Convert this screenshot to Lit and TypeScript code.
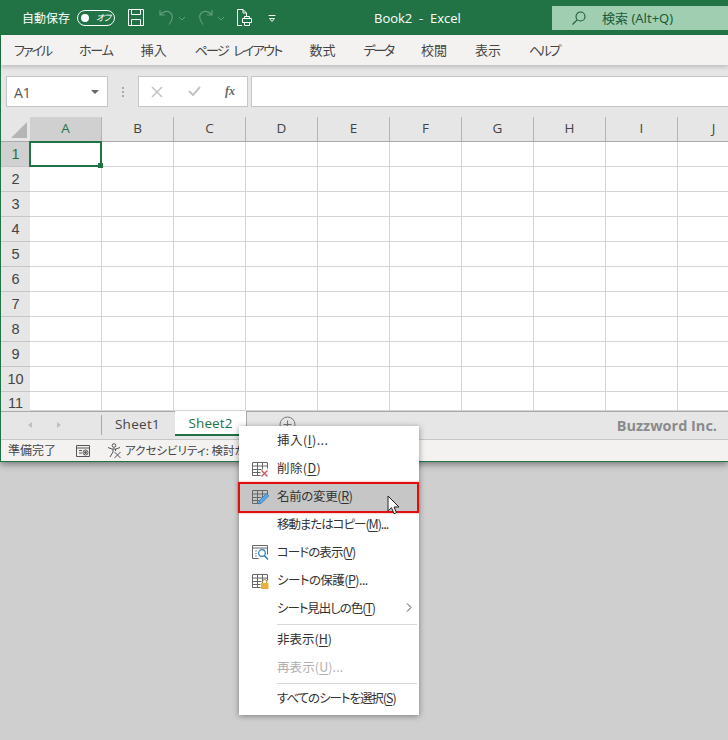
import { LitElement, html, css, svg } from "lit";
import { customElement } from "lit/decorators.js";
import { styleMap } from "lit/directives/style-map.js";

const COLS = ["A", "B", "C", "D", "E", "F", "G", "H", "I", "J"];
const ROWS = [1, 2, 3, 4, 5, 6, 7, 8, 9, 10, 11];
const TABS: [string, number, number][] = [
  ["ファイル", -2, 0], ["ホーム", -1.2, 0], ["挿入", 0, 0], ["ページ レイアウト", -1.7, 4], ["数式", 0, 0],
  ["データ", -2.3, 0], ["校閲", 0, 0], ["表示", 0, 0], ["ヘルプ", -2.4, 0],
];

const gridIcon = (extra: unknown) => html`<svg width="18" height="16" viewBox="0 0 18 16" fill="none" stroke="#666" stroke-width="1">
  <path d="M.5 1.500h15v6M.5 1.500v13h8M.5 5h15M.5 8.500h9M.5 11.500h8M5.500 1.500v13M10.500 1.500v7" />${extra}</svg>`;

const ICONS: Record<string, unknown> = {
  del: gridIcon(svg`<path d="M9.500 9.500l6 6M15.500 9.500l-6 6" stroke="#d8505a" stroke-width="1.300"/>`),
  ren: gridIcon(svg`<path d="M6.500 15l1-3.500 7-7 2.300 2.300-7 7z" fill="#5aa6e0" stroke="#2f7fc0" stroke-width=".8"/>`),
  code: html`<svg width="18" height="16" viewBox="0 0 18 16" fill="none" stroke="#666">
    <path d="M.5 13.500V.5h15v9M.5 13.500h6M.5 3h15" />
    <path d="M3 6h2M3 8.500h2M3 11h2" stroke="#999"/>
    <circle cx="10" cy="8" r="3.300" stroke="#2f7fc0" stroke-width="1.200"/><path d="M12.300 10.500l3.700 4" stroke="#2f7fc0" stroke-width="1.600"/></svg>`,
  lock: gridIcon(svg`<rect x="9" y="10" width="7.500" height="6" fill="#e8b23a" stroke="none"/><path d="M10.700 10V8.500a2 2 0 0 1 4 0V10" stroke="#a8842c"/>`),
};

type Entry = { pre: string; key: string; post?: string; ls?: number; icon?: string; cls?: string; sub?: boolean } | null;
const MENU: Entry[] = [
  { pre: "挿入(", key: "I", post: ")...", ls: 0.5 },
  { pre: "削除(", key: "D", post: ")", ls: 0.4, icon: "del" },
  { pre: "名前の変更(", key: "R", post: ")", ls: -0.35, icon: "ren", cls: "hl" },
  { pre: "移動またはコピー(", key: "M", post: ")...", ls: -1.05 },
  { pre: "コードの表示(", key: "V", post: ")", ls: -0.95, icon: "code" },
  { pre: "シートの保護(", key: "P", post: ")...", ls: -0.55, icon: "lock" },
  { pre: "シート見出しの色(", key: "T", post: ")", ls: -1.05, sub: true },
  null,
  { pre: "非表示(", key: "H", post: ")" },
  { pre: "再表示(", key: "U", post: ")...", ls: 0.1, cls: "off" },
  null,
  { pre: "すべてのシートを選択(", key: "S", post: ")", ls: -1.05 },
];

@customElement("app-root")
export class AppRoot extends LitElement {
  static styles = css`
    :host { display: block; width: 728px; height: 740px; background: #cfcfcf; position: relative; overflow: hidden;
      font-family: "Noto Sans CJK JP", "Noto Sans", sans-serif; color: #444; }
    .win { display: flex; flex-direction: column; height: 461px; border-left: 1px solid #217346; border-bottom: 1px solid #217346;
      box-sizing: content-box; box-shadow: 0 2px 7px rgba(0,0,0,.45); background: #fff; }
    .title { height: 35px; margin-left: -1px; background: #217346; color: #fff; display: flex; align-items: center; flex: none; position: relative; font-size: 12px; }
    .autosave { margin-left: 22px; }
    .toggle { margin-left: 7px; width: 38px; height: 16px; box-sizing: border-box; border: 1px solid #fff; border-radius: 8px; display: flex; align-items: center; position: relative; }
    .toggle i { width: 8px; height: 8px; border-radius: 50%; background: #fff; margin-left: 3px; }
    .toggle span { font-size: 9px; margin-left: 7px; font-style: italic; line-height: 1; font-feature-settings: "palt"; letter-spacing: -.8px; white-space: nowrap; }
    .qa { display: flex; align-items: center; margin-left: 12px; }
    .qa.save { margin-left: 13px; }
    .qa.undo { margin-left: 13px; }
    .qa.redo { margin-left: 5px; }
    .qa.print { margin-left: 7px; }
    .qa.more { margin-left: 16px; padding-top: 2px; }
    .booktitle { position: absolute; left: 374px; top: 10px; font: 13px/17px "Open Sans", sans-serif; white-space: pre; }
    .search { position: absolute; left: 552px; top: 6px; width: 176px; height: 24px; background: #9fcfb0; color: #1e5a3a; display: flex; align-items: center; font-size: 13px; }
    .search svg { margin-left: 19px; }
    .search span { margin-left: 15px; margin-bottom: 2px; font-family: "Noto Sans", "Noto Sans CJK JP", sans-serif; }
    .tabs { height: 30px; box-sizing: border-box; padding: 0 0 2px 13px; flex: none; background: #f3f2f1; display: flex; align-items: center; gap: 28px; font-size: 13px; color: #444; position: relative; z-index: 1; box-shadow: 0 2px 4px rgba(0,0,0,.18); font-feature-settings: "palt"; white-space: nowrap; }
    .fbar { height: 52px; flex: none; background: #e6e6e6; display: flex; padding: 11px 0 10px 5px; box-sizing: border-box; align-items: stretch; }
    .box { background: #fff; border: 1px solid #c6c6c6; box-sizing: border-box; display: flex; align-items: center; }
    .name { width: 102px; padding: 2px 8px 0 7px; justify-content: space-between; font: 14px "Open Sans", sans-serif; color: #555; }
    .tri { width: 0; height: 0; border-left: 4px solid transparent; border-right: 4px solid transparent; border-top: 4px solid #666; margin-top: -2px; }
    .dots { width: 30px; display: flex; flex-direction: column; align-items: center; justify-content: center; gap: 2px; }
    .dots i { width: 2px; height: 2px; background: #aaa; }
    .fx { width: 110px; justify-content: space-between; padding: 0 12px 0 12px; color: #888; }
    .fx em { font: italic bold 12px "Liberation Serif", serif; color: #666; }
    .finput { flex: 1; margin-left: 3px; border-right: none; }
    .grid { flex: 1; min-height: 0; overflow: hidden; display: grid; grid-template-columns: 29px repeat(10, 72px); grid-template-rows: 25px repeat(10, 25px) 19px; background: #fff; }
    .corner { background: #e6e6e6; border-bottom: 1px solid #a9a9a9; box-sizing: border-box; display: flex; align-items: flex-end; justify-content: flex-end; padding: 0 3px 3px 0; }
    .corner i { width: 0; height: 0; border-style: solid; border-width: 0 0 16px 16px; border-color: transparent transparent #b5b5b5 transparent; }
    .ch { background: #e6e6e6; border-right: 1px solid #b4b4b4; border-bottom: 1px solid #a9a9a9; box-sizing: border-box; display: flex; align-items: center; justify-content: center; font: 13.5px "Open Sans", sans-serif; color: #444; padding-bottom: 2px; }
    .ch.sel { background: #d0d0d0; color: #217346; }
    .rh { background: #e6e6e6; border-bottom: 1px solid #c6c6c6; box-sizing: border-box; display: flex; align-items: flex-start; justify-content: center; font: 14.5px/16px "Liberation Sans", sans-serif; color: #444; padding-top: 4px; }
    .rh.sel { background: #d0d0d0; color: #217346; }
    .rh.last { padding-top: 3px; border-bottom: none; }
    .cell { border-right: 1px solid #d4d4d4; border-bottom: 1px solid #d4d4d4; box-sizing: border-box; position: relative; }
    .cell.act::after { content: ""; position: absolute; left: -1px; top: -1px; right: -1px; bottom: -1px; border: 2px solid #217346; }
    .cell.act::before { content: ""; position: absolute; right: -2px; bottom: -2px; width: 5px; height: 5px; background: #217346; z-index: 1; }
    .sheets { height: 27px; flex: none; background: #e6e6e6; border-top: 1px solid #a9a9a9; display: flex; align-items: stretch; position: relative; }
    .nav { width: 101px; display: flex; align-items: center; gap: 25px; padding-left: 27px; box-sizing: border-box; border-right: 1px solid #a9a9a9; margin: 3px 0 4px; }
    .nav i { width: 0; height: 0; border-top: 3px solid transparent; border-bottom: 3px solid transparent; }
    .nav i.l { border-right: 4px solid #c0c0c0; }
    .nav i.r { border-left: 4px solid #c0c0c0; }
    .tab { box-sizing: border-box; display: flex; align-items: center; justify-content: center; font: 13.5px "Open Sans", sans-serif; color: #444; margin-bottom: 3px; letter-spacing: .1px; }
    .tab.t1 { width: 73px; padding-right: 2px; letter-spacing: .3px; }
    .tab.on { width: 72px; background: #fff; color: #217346; border-bottom: 2px solid #217346; margin-top: -1px; border-right: 1px solid #a9a9a9; }
    .plus { margin-left: 32px; margin-top: 4px; }
    .brand { margin-left: auto; margin-right: 11px; align-self: center; font: bold 14.5px "Open Sans", sans-serif; color: #8b8b8b; }
    .status { height: 21px; flex: none; background: #f3f2f1; border-top: 1px solid #c6c6c6; display: flex; align-items: center; font-size: 12px; color: #444; padding-left: 7px; font-feature-settings: "palt"; }
    .status span { margin-bottom: 2px; }
    .status .rec { margin-left: 19px; }
    .status .acc { margin-left: 15px; }
    .status .txt { margin-left: 1px; font-size: 11.5px; white-space: nowrap; }
    .menu { position: absolute; left: 239px; top: 426px; width: 180px; box-sizing: border-box; background: #fff; padding: 1px 0 2px; box-shadow: 0 1px 6px rgba(0,0,0,.4); font-size: 12.5px; color: #333; z-index: 3; font-feature-settings: "palt"; }
    .item { height: 28px; display: flex; align-items: center; position: relative; white-space: nowrap; }
    .item .ic { width: 38px; padding-left: 13px; box-sizing: border-box; display: flex; flex: none; }
    .item .lb { margin-bottom: 4px; }
    .item.hl { background: #c6c6c6; }
    .item.hl::after { content: ""; position: absolute; left: -1px; right: 0; top: -1px; bottom: -2px; border: 2px solid #e01010; box-shadow: 0 0 2px rgba(224,16,16,.45); }
    .item.off { color: #b0b0b0; }
    .item u { text-underline-offset: 2px; }
    .sub { position: absolute; right: 7px; top: 8px; }
    .sep { height: 1px; background: #d8d8d8; margin: 1px 2px 1px 38px; }
    .cursor { position: absolute; left: 387px; top: 495px; z-index: 4; }
  `;

  render() {
    return html`
      <div class="win">
        <div class="title">
          <span class="autosave">自動保存</span>
          <span class="toggle"><i></i><span>オフ</span></span>
          <span class="qa save"><svg width="16" height="17" viewBox="0 0 16 17" fill="none" stroke="#fff" stroke-width="1"><path d="M.5.5h15v16H.5zM3.500.5v5h9v-5M3.500 16.500v-6h9v6"/></svg></span>
          <span class="qa undo">
            <svg width="34" height="20" viewBox="0 0 34 20" fill="none" stroke="#5e9c7c" stroke-width="1.200"><path d="M3 2v5h5M3.500 6.500C6 3.500 10 2.500 13 4.500c3.500 2.500 3 7-1 12"/><path d="M22 9l3 3 3-3" stroke-width="1"/></svg>
          </span>
          <span class="qa redo">
            <svg width="34" height="20" viewBox="0 0 34 20" fill="none" stroke="#5e9c7c" stroke-width="1.200"><path d="M16 2v5h-5M15.500 6.500C13 3.500 9 2.500 6 4.500c-3.500 2.500-3 7 1 12"/><path d="M22 9l3 3 3-3" stroke-width="1"/></svg>
          </span>
          <span class="qa print">
            <svg width="15" height="18" viewBox="0 0 15 18" fill="none" stroke="#fff"><path d="M5 16.500H.5V.5H6L9.500 4v4M6 .5V4h3.500"/><path d="M5.500 9.500h9v4h-9zM7.500 9.500V7.500h5v2M7.500 13.500v3h5v-3"/></svg>
          </span>
          <span class="qa more">
            <svg width="8" height="8" viewBox="0 0 8 8" fill="none" stroke="#fff"><path d="M.5.5h7M1.500 3.500h5L4 6.500z"/></svg>
          </span>
          <span class="booktitle">Book2  -  Excel</span>
          <div class="search">
            <svg width="16" height="16" viewBox="0 0 16 16" fill="none" stroke="#1e5a3a" stroke-width="1.100"><circle cx="9.500" cy="6.500" r="4.500"/><path d="M6.200 9.800L1.500 14.500"/></svg>
            <span>検索 (Alt+Q)</span>
          </div>
        </div>
        <div class="tabs">${TABS.map(([t, ls, ws]) => html`<span style=${styleMap({ letterSpacing: `${ls}px`, wordSpacing: `${ws}px` })}>${t}</span>`)}</div>
        <div class="fbar">
          <div class="box name"><span>A1</span><i class="tri"></i></div>
          <div class="dots"><i></i><i></i><i></i></div>
          <div class="box fx">
            <svg width="12" height="12" viewBox="0 0 12 12" stroke="#c4c4c4" stroke-width="1.500" fill="none"><path d="M1 1l10 10M11 1L1 11"/></svg>
            <svg width="13" height="11" viewBox="0 0 13 11" stroke="#c4c4c4" stroke-width="2" fill="none"><path d="M1 5l4 4 7-8"/></svg>
            <em>fx</em>
          </div>
          <div class="box finput"></div>
        </div>
        <div class="grid">
          <div class="corner"><i></i></div>
          ${COLS.map((c, i) => html`<div class="ch ${i === 0 ? "sel" : ""}">${c}</div>`)}
          ${ROWS.map((r) => html`
            <div class="rh ${r === 1 ? "sel" : ""} ${r === 11 ? "last" : ""}">${r}</div>
            ${COLS.map((_, i) => html`<div class="cell ${r === 1 && i === 0 ? "act" : ""}"></div>`)}
          `)}
        </div>
        <div class="sheets">
          <div class="nav"><i class="l"></i><i class="r"></i></div>
          <div class="tab t1">Sheet1</div>
          <div class="tab on">Sheet2</div>
          <svg class="plus" width="17" height="17" viewBox="0 0 17 17" fill="none" stroke="#777"><circle cx="8.500" cy="8.500" r="7.500"/><path d="M8.500 4.500v8M4.500 8.500h8"/></svg>
          <span class="brand">Buzzword Inc.</span>
        </div>
        <div class="status">
          <span>準備完了</span>
          <svg class="rec" width="16" height="14" viewBox="0 0 16 14" fill="none" stroke="#555"><path d="M1.500 1.500h13v11h-13zM1.500 4h13M4 6.500h3M4 9h3"/><circle cx="10.500" cy="8.500" r="2.500"/><circle cx="10.500" cy="8.500" r="1" fill="#555"/></svg>
          <svg class="acc" width="18" height="16" viewBox="0 0 18 16" fill="none" stroke="#555"><circle cx="8" cy="2.500" r="1.800"/><path d="M2 4.500l4 1.500h4l4-1.500M7 6v3l-3 5M9.500 6v2"/><path d="M8.500 9l6 6M14.500 9l-6 6"/></svg>
          <span class="txt">アクセシビリティ: 検討が</span>
        </div>
      </div>
      <div class="menu">
        ${MENU.map((m) => m === null ? html`<div class="sep"></div>` : html`
          <div class="item ${m.cls ?? ""}">
            <span class="ic">${m.icon ? ICONS[m.icon] : ""}</span>
            <span class="lb" style=${styleMap({ letterSpacing: `${m.ls ?? 0}px` })}>${m.pre}<u>${m.key}</u>${m.post}</span>
            ${m.sub ? html`<svg class="sub" width="6" height="9" viewBox="0 0 6 9" fill="none" stroke="#444"><path d="M1 .5l4 4-4 4"/></svg>` : ""}
          </div>`)}
      </div>
      <svg class="cursor" width="13" height="20" viewBox="0 0 13 20"><path d="M1 1v15l3.500-3.300 2.500 6 2.500-1-2.500-5.700H12z" fill="#fff" stroke="#222" stroke-width="1"/></svg>
    `;
  }
}
